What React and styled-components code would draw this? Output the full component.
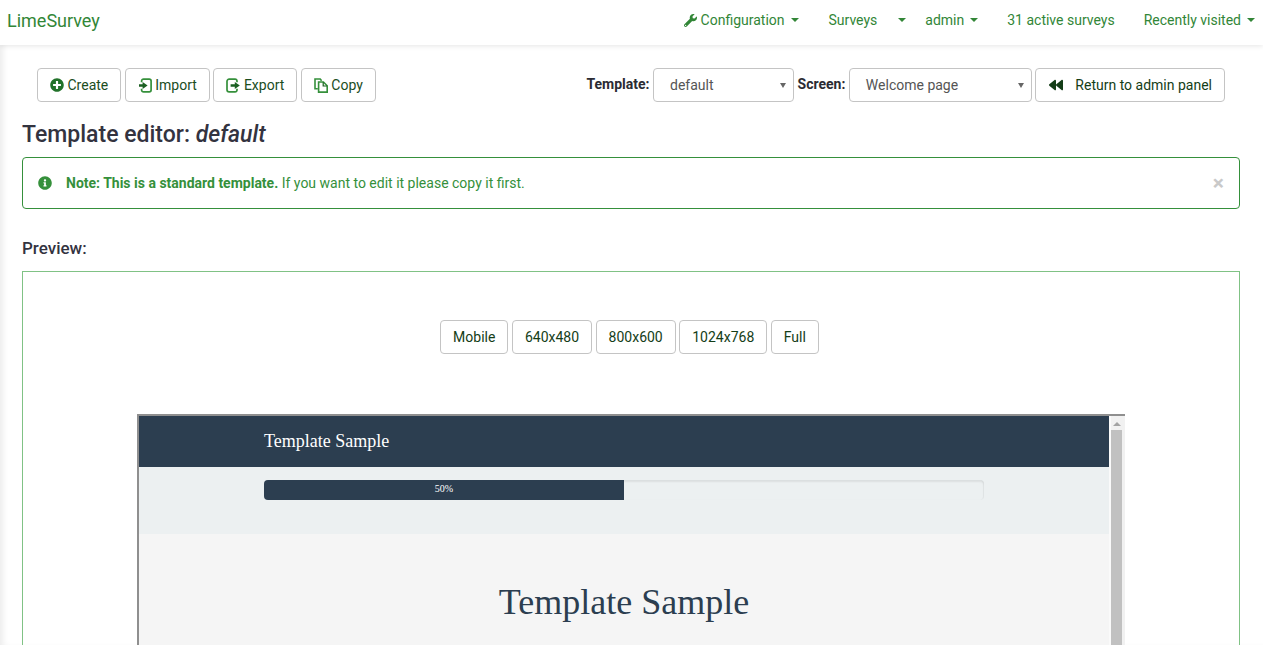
import React from "react";
import styled, { createGlobalStyle } from "styled-components";
import { FaPlusCircle, FaWrench, FaInfoCircle, FaBackward } from "react-icons/fa";

const GlobalStyle = createGlobalStyle`
  html, body {
    margin: 0;
    height: 100%;
    overflow: hidden;
    background: #fff;
  }
  body {
    font-family: Roboto, "Liberation Sans", sans-serif;
    font-size: 14px;
    color: #283593;
  }
  * { box-sizing: border-box; }
`;

const green = "#328637";
const alertGreen = "#35903b";

const Page = styled.div`
  height: 645px;
  overflow: hidden;
  box-shadow: inset 6px 0 6px -3px #ececec;
`;

const Navbar = styled.nav`
  height: 45px;
  background: #fff;
  box-shadow: 0 1px 5px rgba(0, 0, 0, 0.1);
  display: flex;
  align-items: center;
  justify-content: space-between;
  padding: 0 8px 5px 7px;
`;

const Brand = styled.a`
  font-size: 18px;
  color: ${green};
`;

const NavMenu = styled.div`
  display: flex;
  gap: 29px;
  align-items: center;
`;

const NavItem = styled.a`
  color: ${green};
  font-size: 14px;
  display: flex;
  align-items: center;
  gap: 4px;
`;

const Caret = styled.span`
  width: 0;
  height: 0;
  margin-left: 2px;
  border-top: 4px solid ${green};
  border-left: 4px solid transparent;
  border-right: 4px solid transparent;
`;

const SurveysCaret = styled(Caret)`
  margin-left: 17px;
`;

const NavGroup = styled.div`
  display: flex;
  align-items: center;
  gap: 19px;
  margin-left: 1px;
`;

const Content = styled.main`
  padding: 23px 23px 0 22px;
`;

const Toolbar = styled.div`
  display: flex;
  align-items: center;
  justify-content: space-between;
  padding: 0 15px;
`;

const ButtonGroup = styled.div`
  display: flex;
  gap: 3.5px;
  align-items: center;
`;

const Button = styled.a`
  height: 34px;
  padding: 0 12px;
  border: 1px solid #c4c4c4;
  border-radius: 4px;
  background: #fff;
  color: #1b4d1e;
  font-size: 14px;
  display: inline-flex;
  align-items: center;
  gap: 3.5px;
  white-space: nowrap;
`;

const ReturnButton = styled(Button)`
  padding-left: 13px;
  gap: 12px;
  color: #143d17;
`;

const FieldLabel = styled.label`
  font-weight: 700;
  font-size: 14px;
  color: #2b2b33;
  margin-top: -2px;
`;

const SelectBox = styled.div`
  width: ${(p) => p.$width}px;
  height: 34px;
  padding: 0 16px;
  border: 1px solid #c4c4c4;
  border-radius: 4px;
  background: #fff;
  color: #555;
  display: flex;
  align-items: center;
  justify-content: space-between;
`;

const SelectArrow = styled.span`
  width: 0;
  height: 0;
  margin-right: -9px;
  border-top: 5px solid #666;
  border-left: 3px solid transparent;
  border-right: 3px solid transparent;
`;

const Title = styled.h3`
  margin: 19px 0 0;
  font-size: 23px;
  line-height: 28px;
  font-weight: 500;
  color: #33333f;
  em { font-style: italic; }
`;

const Alert = styled.div`
  margin-top: 8px;
  height: 52px;
  border: 1px solid ${alertGreen};
  border-radius: 4px;
  padding: 0 15px;
  display: flex;
  align-items: center;
  gap: 14px;
  color: ${alertGreen};
  font-size: 14px;
  strong { font-weight: 700; }
`;

const AlertText = styled.span`
  flex: 1;
`;

const Close = styled.span`
  color: #c9c9c9;
  font-size: 21px;
  font-weight: 700;
  line-height: 1;
`;

const PreviewLabel = styled.h4`
  margin: 29px 0 0;
  font-size: 17px;
  line-height: 20px;
  font-weight: 500;
  color: #33333f;
`;

const PreviewFrame = styled.section`
  margin-top: 13px;
  height: 500px;
  border: 1px solid #80c285;
  padding-top: 48px;
`;

const Sizes = styled.div`
  display: flex;
  justify-content: center;
  gap: 3.5px;
  padding-right: 3px;
`;

const SizeButton = styled(Button)`
  color: #143d17;
`;

const Viewport = styled.div`
  margin: 60px auto 0;
  width: 988px;
  height: 400px;
  border-top: 2px solid #8f8f8f;
  border-left: 2px solid #8f8f8f;
  display: flex;
`;

const ViewportBody = styled.div`
  flex: 1;
  font-family: "Liberation Serif", serif;
  background: #f5f5f5;
`;

const SampleHeader = styled.header`
  height: 51px;
  background: #2c3e50;
  color: #fff;
  font-size: 18px;
  padding-left: 125px;
  display: flex;
  align-items: center;
`;

const ProgressBand = styled.div`
  height: 67px;
  background: #ecf0f1;
  padding: 13px 125px 0;
`;

const ProgressTrack = styled.div`
  width: 720px;
  height: 20px;
  border-radius: 4px;
  background: #ecf0f1;
  box-shadow: inset 0 2px 2px rgba(0, 0, 0, 0.07), inset -1px 0 1px rgba(0, 0, 0, 0.04);
`;

const ProgressFill = styled.div`
  height: 100%;
  background: #2c3e50;
  border-radius: 4px 0 0 4px;
  color: #fff;
  font-size: 10px;
  line-height: 18px;
  text-align: center;
`;

const SampleTitle = styled.h1`
  margin: 46px 0 0;
  font-size: 36px;
  line-height: 44px;
  font-weight: 400;
  text-align: center;
  color: #2c3e50;
`;

const Scrollbar = styled.div`
  width: 17px;
  background: linear-gradient(to right, #fafafa 2px, #f1f1f1 2px);
  padding-left: 2px;
  display: flex;
  flex-direction: column;
  align-items: flex-start;
`;

const ScrollUp = styled.span`
  width: 0;
  height: 0;
  margin: 6px 0 4px 1.5px;
  border-bottom: 4px solid #a3a3a3;
  border-left: 4px solid transparent;
  border-right: 4px solid transparent;
`;

const ScrollThumb = styled.div`
  width: 11px;
  flex: 1;
  background: #c1c1c1;
`;

const ImportIcon = () => (
  <svg width="14" height="15" viewBox="0 0 14 15" fill="none">
    <path d="M3.6 4.2V3a1.9 1.9 0 0 1 1.9-1.9h5.7a1.9 1.9 0 0 1 1.9 1.9v9a1.9 1.9 0 0 1-1.9 1.9H5.5A1.9 1.9 0 0 1 3.6 12v-1.2" stroke="#35903b" strokeWidth="1.7" />
    <path d="M1 6.2h3.6V3.9L9.6 7.5l-5 3.6V8.8H1z" fill="#1b5f22" />
  </svg>
);

const ExportIcon = () => (
  <svg width="14" height="15" viewBox="0 0 14 15" fill="none">
    <path d="M11 4.2V3a1.9 1.9 0 0 0-1.9-1.9H3.2A2.2 2.2 0 0 0 1 3.3v8.4a2.2 2.2 0 0 0 2.2 2.2h5.9a1.9 1.9 0 0 0 1.9-1.9v-1.2" stroke="#35903b" strokeWidth="1.7" />
    <path d="M4.6 6.2h4.2V3.9l5 3.6-5 3.6V8.8H4.6z" fill="#1b5f22" />
  </svg>
);

const CopyIcon = () => (
  <svg width="14" height="15" viewBox="0 0 14 15" fill="none">
    <path d="M3.8 10.8H1V1h5.2l1.4 1.8" stroke="#35903b" strokeWidth="1.6" />
    <path d="M4.6 4h4.8l3.8 3.8v6.3H4.6z" stroke="#35903b" strokeWidth="1.6" />
    <path d="M9.2 4.2v3.8h3.8" stroke="#1b5f22" strokeWidth="1.2" />
  </svg>
);

const GreenPlus = styled(FaPlusCircle)`
  color: #22722a;
  font-size: 14px;
`;

const AlertInfo = styled(FaInfoCircle)`
  font-size: 14px;
  color: ${alertGreen};
`;

const BackIcon = styled(FaBackward)`
  font-size: 14px;
  color: #143d17;
`;

export default function App() {
  return (
    <Page>
      <GlobalStyle />
      <Navbar>
        <Brand>LimeSurvey</Brand>
        <NavMenu>
          <NavItem>
            <FaWrench size={13} />
            Configuration
            <Caret />
          </NavItem>
          <NavGroup>
            <NavItem>
              Surveys
              <SurveysCaret />
            </NavItem>
            <NavItem>
              admin
              <Caret />
            </NavItem>
          </NavGroup>
          <NavItem>31 active surveys</NavItem>
          <NavItem>
            Recently visited
            <Caret />
          </NavItem>
        </NavMenu>
      </Navbar>
      <Content>
        <Toolbar>
          <ButtonGroup>
            <Button><GreenPlus />Create</Button>
            <Button><ImportIcon />Import</Button>
            <Button><ExportIcon />Export</Button>
            <Button><CopyIcon />Copy</Button>
          </ButtonGroup>
          <ButtonGroup>
            <FieldLabel>Template:</FieldLabel>
            <SelectBox $width={141}>default<SelectArrow /></SelectBox>
            <FieldLabel>Screen:</FieldLabel>
            <SelectBox $width={183}>Welcome page<SelectArrow /></SelectBox>
            <ReturnButton><BackIcon />Return to admin panel</ReturnButton>
          </ButtonGroup>
        </Toolbar>
        <Title>Template editor: <em>default</em></Title>
        <Alert>
          <AlertInfo />
          <AlertText>
            <strong>Note: This is a standard template.</strong> If you want to edit it please copy it first.
          </AlertText>
          <Close>×</Close>
        </Alert>
        <PreviewLabel>Preview:</PreviewLabel>
        <PreviewFrame>
          <Sizes>
            <SizeButton>Mobile</SizeButton>
            <SizeButton>640x480</SizeButton>
            <SizeButton>800x600</SizeButton>
            <SizeButton>1024x768</SizeButton>
            <SizeButton>Full</SizeButton>
          </Sizes>
          <Viewport>
            <ViewportBody>
              <SampleHeader>Template Sample</SampleHeader>
              <ProgressBand>
                <ProgressTrack>
                  <ProgressFill style={{ width: "50%" }}>50%</ProgressFill>
                </ProgressTrack>
              </ProgressBand>
              <SampleTitle>Template Sample</SampleTitle>
            </ViewportBody>
            <Scrollbar>
              <ScrollUp />
              <ScrollThumb />
            </Scrollbar>
          </Viewport>
        </PreviewFrame>
      </Content>
    </Page>
  );
}
